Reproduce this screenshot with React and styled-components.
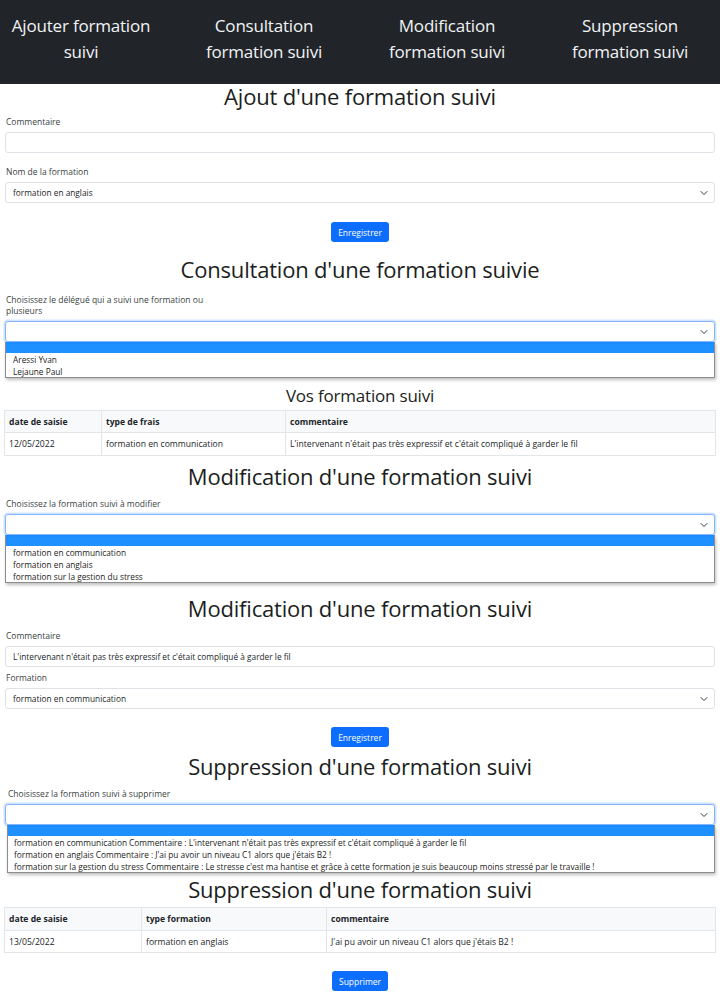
import React from "react";
import styled, { createGlobalStyle } from "styled-components";

const GlobalStyle = createGlobalStyle`
  html, body { margin: 0; padding: 0; background: #fff; }
  body {
    font-family: "Open Sans", "Noto Sans", Arial, sans-serif;
    color: #212529;
    overflow: hidden;
  }
  * { box-sizing: border-box; }
`;

const Nav = styled.nav`
  height: 84px;
  background: #212529;
  display: flex;
  gap: 21px;
  padding-top: 13px;
`;

const NavItem = styled.div`
  width: 162px;
  text-align: center;
  color: #f1f3f5;
  font-size: 17px;
  line-height: 26px;
  letter-spacing: -0.2px;
`;

const Page = styled.main`
  display: flex;
  flex-direction: column;
  padding: 0 5px;
`;

const Title = styled.h2`
  margin: ${(p) => p.$mt || 0}px 0 0;
  font-size: ${(p) => p.$size || 22}px;
  line-height: ${(p) => p.$lh || 24}px;
  padding-bottom: ${(p) => (p.$lh ? 0 : 2)}px;
  font-weight: 500;
  text-align: center;
  letter-spacing: -0.2px;
  color: #1b1e21;
`;

const Label = styled.div`
  margin-top: ${(p) => p.$mt || 0}px;
  padding-left: ${(p) => p.$indent || 1}px;
  font-size: 8.5px;
  line-height: ${(p) => p.$lh || 12}px;
  color: #3b3f44;
  max-width: ${(p) => p.$maxw || "none"};
`;

const Control = styled.div`
  margin-top: ${(p) => p.$mt || 4}px;
  height: 21px;
  border: 1px solid ${(p) => (p.$focus ? "#86b7fe" : "#dee2e6")};
  box-shadow: ${(p) => (p.$focus ? "0 0 0 1.5px rgba(13,110,253,.2)" : "none")};
  border-radius: 3px;
  display: flex;
  align-items: center;
  justify-content: space-between;
  padding: 0 6px 0 7px;
  font-size: 8.3px;
  color: #212529;
  background: #fff;
  position: relative;
  z-index: 1;
`;

const Chevron = () => (
  <svg width="8" height="6" viewBox="0 0 16 12" aria-hidden="true">
    <path d="M2 3l6 6 6-6" fill="none" stroke="#343a40" strokeWidth="2" strokeLinecap="round" strokeLinejoin="round" />
  </svg>
);

const OptionList = styled.div`
  margin-left: ${(p) => p.$ml || 0}px;
  border: 1px solid #8d8d8d;
  border-top: none;
  background: #fff;
  box-shadow: 1px 2px 3px rgba(0, 0, 0, 0.25);
  font-size: 8.3px;
  color: #222;
`;

const Option = styled.div`
  height: ${(p) => (p.$active ? 11 : 12)}px;
  line-height: 12px;
  padding-top: ${(p) => (p.$active ? 0 : 1)}px;
  padding-left: ${(p) => p.$pad || 7}px;
  background: ${(p) => (p.$active ? "#1e90ff" : "transparent")};
  white-space: nowrap;
`;

const Button = styled.button`
  align-self: center;
  margin-top: ${(p) => p.$mt || 0}px;
  height: 20px;
  padding: 0 7px;
  border: none;
  border-radius: 3px;
  background: #0d6efd;
  color: #fff;
  font-family: inherit;
  font-size: 8.5px;
  cursor: pointer;
`;

const Table = styled.table`
  margin-top: ${(p) => p.$mt || 0}px;
  margin-left: -1px;
  width: calc(100% + 2px);
  border-collapse: collapse;
  font-size: 8.6px;
  color: #212529;
  table-layout: fixed;
  th, td {
    border: 1px solid #e3e6e9;
    text-align: left;
    padding: 0 4px;
    white-space: nowrap;
  }
  th {
    background: #f8f9fa;
    font-weight: 700;
    height: ${(p) => p.$headH || 22}px;
  }
  td { height: ${(p) => p.$rowH || 23}px; }
`;

function Select({ value, focus, mt }) {
  return (
    <Control $focus={focus} $mt={mt}>
      <span>{value}</span>
      <Chevron />
    </Control>
  );
}

export default function App() {
  return (
    <>
      <GlobalStyle />
      <Nav>
        <NavItem>Ajouter formation<br />suivi</NavItem>
        <NavItem>Consultation<br />formation suivi</NavItem>
        <NavItem>Modification<br />formation suivi</NavItem>
        <NavItem>Suppression<br />formation suivi</NavItem>
      </Nav>
      <Page>
        <Title>Ajout d'une formation suivi</Title>
        <Label $mt={6}>Commentaire</Label>
        <Control />
        <Label $mt={13}>Nom de la formation</Label>
        <Select value="formation en anglais" />
        <Button $mt={19}>Enregistrer</Button>

        <Title $mt={15}>Consultation d'une formation suivie</Title>
        <Label $mt={11} $lh={11} $maxw="205px">
          Choisissez le délégué qui a suivi une formation ou plusieurs
        </Label>
        <Select focus mt={5} />
        <OptionList>
          <Option $active />
          <Option>Aressi Yvan</Option>
          <Option>Lejaune Paul</Option>
        </OptionList>
        <Title $mt={7} $size={17} $lh={22}>Vos formation suivi</Title>
        <Table $mt={3}>
          <colgroup>
            <col style={{ width: "97px" }} />
            <col style={{ width: "184px" }} />
            <col />
          </colgroup>
          <thead>
            <tr><th>date de saisie</th><th>type de frais</th><th>commentaire</th></tr>
          </thead>
          <tbody>
            <tr>
              <td>12/05/2022</td>
              <td>formation en communication</td>
              <td>L'intervenant n'était pas très expressif et c'était compliqué à garder le fil</td>
            </tr>
          </tbody>
        </Table>

        <Title $mt={8}>Modification d'une formation suivi</Title>
        <Label $mt={8}>Choisissez la formation suivi à modifier</Label>
        <Select focus mt={4} />
        <OptionList>
          <Option $active />
          <Option>formation en communication</Option>
          <Option>formation en anglais</Option>
          <Option>formation sur la gestion du stress</Option>
        </OptionList>

        <Title $mt={13}>Modification d'une formation suivi</Title>
        <Label $mt={8}>Commentaire</Label>
        <Control>L'intervenant n'était pas très expressif et c'était compliqué à garder le fil</Control>
        <Label $mt={5}>Formation</Label>
        <Select value="formation en communication" />
        <Button $mt={18}>Enregistrer</Button>

        <Title $mt={7}>Suppression d'une formation suivi</Title>
        <Label $mt={8} $indent={3}>Choisissez la formation suivi à supprimer</Label>
        <Select focus mt={4} />
        <OptionList $ml={2}>
          <Option $active />
          <Option $pad={6}>formation en communication Commentaire : L'intervenant n'était pas très expressif et c'était compliqué à garder le fil</Option>
          <Option $pad={6}>formation en anglais Commentaire : J'ai pu avoir un niveau C1 alors que j'étais B2 !</Option>
          <Option $pad={6}>formation sur la gestion du stress Commentaire : Le stresse c'est ma hantise et grâce à cette formation je suis beaucoup moins stressé par le travaille !</Option>
        </OptionList>

        <Title $mt={4}>Suppression d'une formation suivi</Title>
        <Table $mt={4} $headH={23} $rowH={22}>
          <colgroup>
            <col style={{ width: "137px" }} />
            <col style={{ width: "185px" }} />
            <col />
          </colgroup>
          <thead>
            <tr><th>date de saisie</th><th>type formation</th><th>commentaire</th></tr>
          </thead>
          <tbody>
            <tr>
              <td>13/05/2022</td>
              <td>formation en anglais</td>
              <td>J'ai pu avoir un niveau C1 alors que j'étais B2 !</td>
            </tr>
          </tbody>
        </Table>
        <Button $mt={18}>Supprimer</Button>
      </Page>
    </>
  );
}
